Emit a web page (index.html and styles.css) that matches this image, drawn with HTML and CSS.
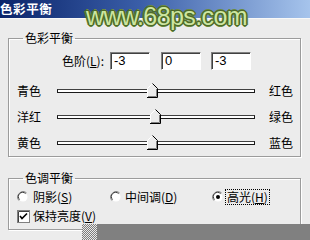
FILE: index.html
```html
<!DOCTYPE html>
<html>
<head>
<meta charset="utf-8">
<link rel="stylesheet" href="styles.css">
</head>
<body>
<div class="titlebar"><span class="title">色彩平衡</span></div>
<div class="watermark">www.68ps.com</div>
<div class="content">
  <fieldset class="group g1">
    <legend>色彩平衡</legend>
    <div class="levels">
      <span class="lvl-label">色阶(<u>L</u>):</span>
      <div class="input i1">-3</div>
      <div class="input i2">0</div>
      <div class="input i3">-3</div>
    </div>
    <div class="sliders">
      <div class="srow">
        <span class="lbl">青色</span>
        <div class="track"><svg class="thumb" style="left:calc(48.5% - 6px)" width="11" height="15" viewBox="0 0 11 15"><polygon points="0.5,5.5 5.5,0.5 10.5,5.5 10.5,14.5 0.5,14.5" fill="#ececec"/><polyline points="0.5,14 0.5,5.5 5.5,0.5" fill="none" stroke="#fff"/><polyline points="5.5,0.5 10.5,5.5 10.5,14.5 0,14.5" fill="none" stroke="#000"/><polyline points="9.5,6 9.5,13.5 1,13.5" fill="none" stroke="#808080"/></svg></div>
        <span class="lbl">红色</span>
      </div>
      <div class="srow">
        <span class="lbl">洋红</span>
        <div class="track"><svg class="thumb" style="left:calc(50% - 6px)" width="11" height="15" viewBox="0 0 11 15"><polygon points="0.5,5.5 5.5,0.5 10.5,5.5 10.5,14.5 0.5,14.5" fill="#ececec"/><polyline points="0.5,14 0.5,5.5 5.5,0.5" fill="none" stroke="#fff"/><polyline points="5.5,0.5 10.5,5.5 10.5,14.5 0,14.5" fill="none" stroke="#000"/><polyline points="9.5,6 9.5,13.5 1,13.5" fill="none" stroke="#808080"/></svg></div>
        <span class="lbl">绿色</span>
      </div>
      <div class="srow">
        <span class="lbl">黄色</span>
        <div class="track"><svg class="thumb" style="left:calc(48.5% - 6px)" width="11" height="15" viewBox="0 0 11 15"><polygon points="0.5,5.5 5.5,0.5 10.5,5.5 10.5,14.5 0.5,14.5" fill="#ececec"/><polyline points="0.5,14 0.5,5.5 5.5,0.5" fill="none" stroke="#fff"/><polyline points="5.5,0.5 10.5,5.5 10.5,14.5 0,14.5" fill="none" stroke="#000"/><polyline points="9.5,6 9.5,13.5 1,13.5" fill="none" stroke="#808080"/></svg></div>
        <span class="lbl">蓝色</span>
      </div>
    </div>
  </fieldset>
  <fieldset class="group g2">
    <legend>色调平衡</legend>
    <div class="radios">
      <div class="opt o1">
        <svg class="radio" width="12" height="12" viewBox="0 0 12 12"><circle cx="6" cy="6" r="4.5" fill="#fff"/><path d="M1.8 9.5 A5.5 5.5 0 0 1 9.5 1.8" fill="none" stroke="#808080"/><path d="M2.6 8.6 A4.2 4.2 0 0 1 8.6 2.6" fill="none" stroke="#404040"/></svg>
        <span>阴影(<u>S</u>)</span>
      </div>
      <div class="opt o2">
        <svg class="radio" width="12" height="12" viewBox="0 0 12 12"><circle cx="6" cy="6" r="4.5" fill="#fff"/><path d="M1.8 9.5 A5.5 5.5 0 0 1 9.5 1.8" fill="none" stroke="#808080"/><path d="M2.6 8.6 A4.2 4.2 0 0 1 8.6 2.6" fill="none" stroke="#404040"/></svg>
        <span>中间调(<u>D</u>)</span>
      </div>
      <div class="opt o3">
        <svg class="radio" width="12" height="12" viewBox="0 0 12 12"><circle cx="6" cy="6" r="4.5" fill="#fff"/><path d="M1.8 9.5 A5.5 5.5 0 0 1 9.5 1.8" fill="none" stroke="#808080"/><path d="M2.6 8.6 A4.2 4.2 0 0 1 8.6 2.6" fill="none" stroke="#404040"/><circle cx="6" cy="6" r="2" fill="#000"/></svg>
        <span class="focus">高光(<u>H</u>)</span>
      </div>
    </div>
    <div class="checkrow">
      <svg class="check" width="13" height="13" viewBox="0 0 13 13"><rect x="0.5" y="0.5" width="12" height="12" fill="#fff" stroke="#808080"/><path d="M1.5 12 V1.5 H12" fill="none" stroke="#404040"/><path d="M3 6 L5 8.5 L10 3.5" fill="none" stroke="#000" stroke-width="1.6"/></svg>
      <span>保持亮度(<u>V</u>)</span>
    </div>
  </fieldset>
</div>
<div class="cover"><div class="dither"></div><div class="grey"></div></div>
</body>
</html>
```

FILE: styles.css
```css
* { box-sizing: border-box; }
html, body { margin: 0; padding: 0; }
body {
  width: 310px;
  height: 240px;
  overflow: hidden;
  position: relative;
  background: #ececec;
  color: #000;
  font: 12px/14px "Noto Sans CJK SC", sans-serif;
}
u { text-decoration: underline; text-underline-offset: 1px; }

.titlebar {
  height: 19px;
  border-bottom: 1px solid #f8f8f8;
  background: linear-gradient(90deg, #0a246a 0%, #3a5ea8 45%, #a6c4ec 100%);
  display: flex;
  align-items: center;
}
.title {
  color: #fff;
  font-weight: 700;
  font-size: 12.5px;
  letter-spacing: 0.6px;
}

.watermark {
  position: absolute;
  left: 86px;
  top: 2px;
  font: 25px/28px "Liberation Sans", sans-serif;
  letter-spacing: -0.6px;
  color: #cde6a0;
  text-shadow:
    1px 0 0 #4e6a2a, -1px 0 0 #4e6a2a, 0 1px 0 #4e6a2a, 0 -1px 0 #4e6a2a,
    1px 1px 0 #4e6a2a, -1px -1px 0 #4e6a2a, 1px -1px 0 #4e6a2a, -1px 1px 0 #4e6a2a,
    2px 0 0 #6a8a3c, -2px 0 0 #6a8a3c, 0 2px 0 #6a8a3c, 0 -2px 0 #6a8a3c;
}

.content { padding-top: 12px; }

.group {
  margin: 0 9px 0 8px;
  padding: 0 7px 0 8px;
  border: 1px solid #9c9c9c;
  box-shadow: inset 1px 1px 0 #fff, 1px 1px 0 #fff;
  min-width: 0;
}
.group legend {
  margin-left: 6px;
  padding: 0 2px;
  line-height: 14px;
}

.levels {
  display: flex;
  align-items: center;
  height: 18px;
  margin-top: 7px;
}
.lvl-label {
  width: 87px;
  text-align: right;
  margin-right: 6px;
}
.input {
  width: 40px;
  height: 18px;
  background: #fff;
  border: 1px solid;
  border-color: #808080 #fff #fff #808080;
  box-shadow: inset 1px 1px 0 #404040;
  padding-left: 3px;
  font: 13px/16px "Liberation Sans", sans-serif;
}
.i2 { margin-left: 11px; }
.i3 { margin-left: 10px; }

.sliders { margin-top: 8px; }
.srow {
  display: flex;
  align-items: center;
  height: 26px;
}
.lbl { width: 24px; flex: none; }
.track {
  flex: 1;
  height: 4px;
  margin: 0 14px 0 16px;
  position: relative;
  background: #fff;
  border: 1px solid #1a1a1a;
  border-top-color: #404040;
}
.thumb {
  position: absolute;
  top: -7px;
  display: block;
}

.g2 { margin-top: 14px; padding-bottom: 5px; }
.radios {
  display: flex;
  align-items: center;
  height: 16px;
  margin-top: 4px;
}
.opt { display: flex; align-items: center; }
.o1 { width: 93px; gap: 4px; }
.o2 { width: 102px; gap: 3px; }
.o3 { gap: 2px; }
.radio { display: block; flex: none; }
.focus {
  outline: 1px dotted #000;
  outline-offset: 0;
  padding: 0 1px;
}
.checkrow {
  display: flex;
  align-items: center;
  gap: 3px;
  height: 16px;
  margin-top: 3px;
}
.check { display: block; flex: none; }

.cover {
  position: absolute;
  left: 82px;
  right: 0;
  bottom: 0;
  height: 16px;
  display: flex;
}
.dither {
  width: 15px;
  background: repeating-conic-gradient(#7c7c7c 0 25%, #e8e8e8 0 50%) 0 0 / 2px 2px;
}
.grey { flex: 1; background: #808080; }
```
